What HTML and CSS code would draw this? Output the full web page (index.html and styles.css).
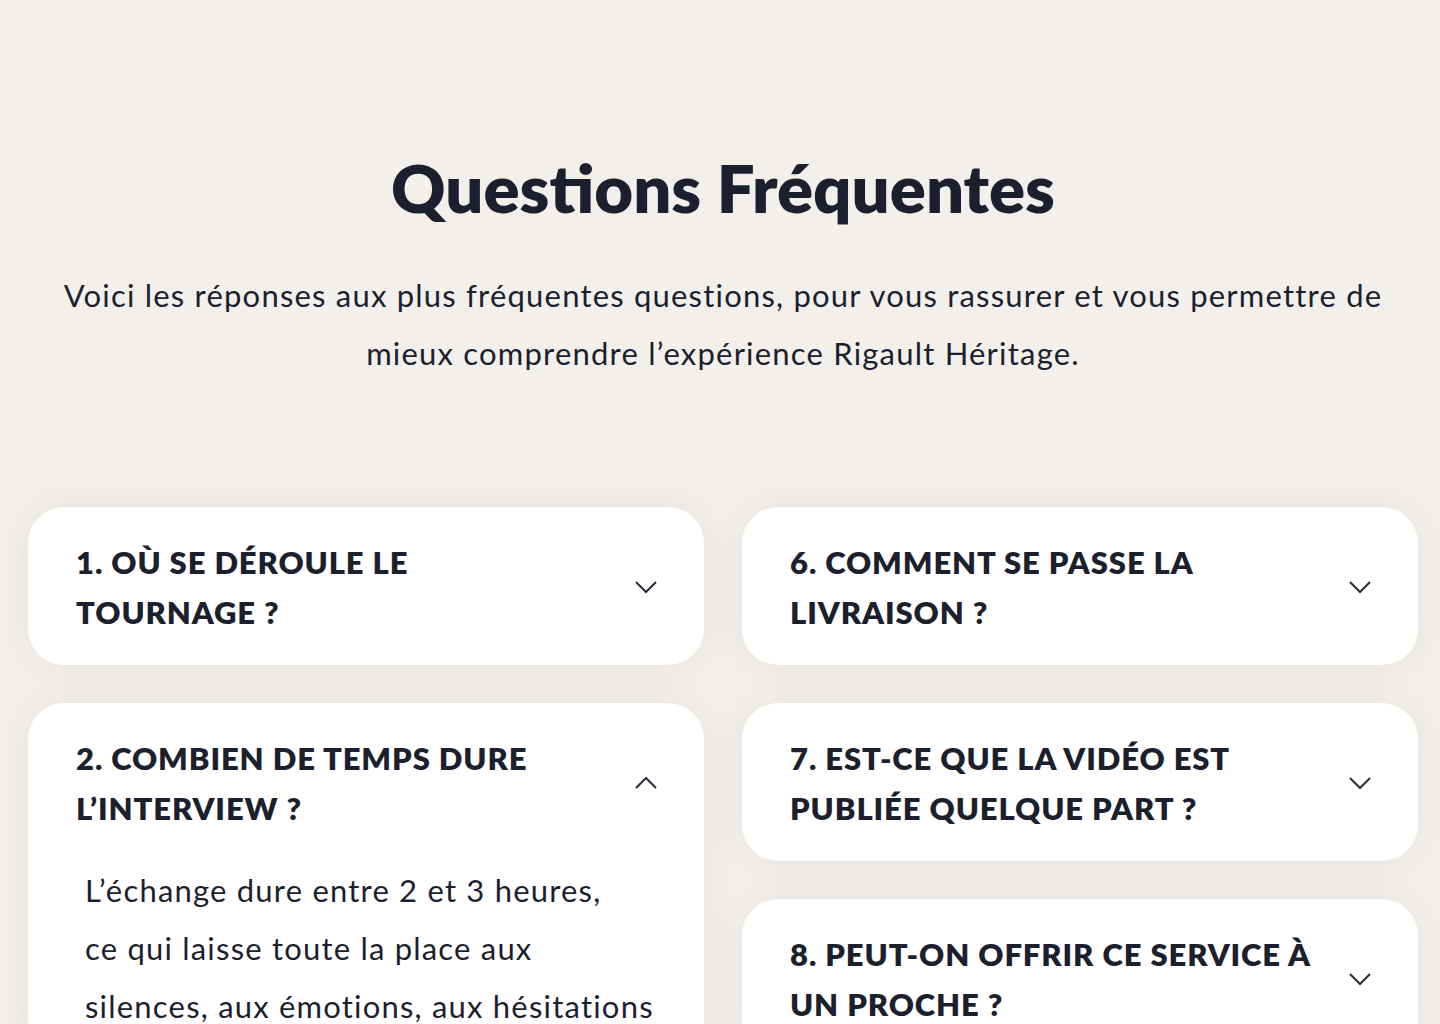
FILE: index.html
```html
<!DOCTYPE html>
<html lang="fr">
<head>
  <meta charset="UTF-8">
  <meta name="viewport" content="width=device-width, initial-scale=1.0">
  <title>Questions Fréquentes</title>
  <link rel="stylesheet" href="styles.css">
</head>
<body>
  <section id="faq">
    <h1 class="titre">Questions Fréquentes</h1>
    <p class="intro">Voici les réponses aux plus fréquentes questions, pour vous rassurer et vous permettre de mieux comprendre l’expérience Rigault Héritage.</p>

    <div class="colonnes">
      <div class="colonne">
        <div class="question">
          <div class="entete">
            <h3>1. OÙ SE DÉROULE LE TOURNAGE&nbsp;?</h3>
            <svg class="fleche" viewBox="0 0 24 14"><path d="M2 2 L12 12 L22 2"/></svg>
          </div>
        </div>
        <div class="question ouverte">
          <div class="entete">
            <h3>2. COMBIEN DE TEMPS DURE L’INTERVIEW&nbsp;?</h3>
            <svg class="fleche" viewBox="0 0 24 14"><path d="M2 12 L12 2 L22 12"/></svg>
          </div>
          <p class="reponse">L’échange dure entre 2 et 3 heures,<br>ce qui laisse toute la place aux<br>silences, aux émotions, aux hésitations</p>
        </div>
      </div>

      <div class="colonne">
        <div class="question">
          <div class="entete">
            <h3>6. COMMENT SE PASSE LA LIVRAISON&nbsp;?</h3>
            <svg class="fleche" viewBox="0 0 24 14"><path d="M2 2 L12 12 L22 2"/></svg>
          </div>
        </div>
        <div class="question">
          <div class="entete">
            <h3>7. EST-CE QUE LA VIDÉO EST PUBLIÉE QUELQUE PART&nbsp;?</h3>
            <svg class="fleche" viewBox="0 0 24 14"><path d="M2 2 L12 12 L22 2"/></svg>
          </div>
        </div>
        <div class="question">
          <div class="entete">
            <h3>8. PEUT-ON OFFRIR CE SERVICE À UN PROCHE&nbsp;?</h3>
            <svg class="fleche" viewBox="0 0 24 14"><path d="M2 2 L12 12 L22 2"/></svg>
          </div>
        </div>
      </div>
    </div>
  </section>
</body>
</html>
```

FILE: styles.css
```css
* {
  margin: 0;
  padding: 0;
  box-sizing: border-box;
}

body {
  background-color: #f3f0ec;
  color: #1b1f2e;
  font-family: Lato, "Noto Sans", sans-serif;
}

#faq {
  padding: 151px 22px 0 28px;
}

.titre {
  text-align: center;
  font-size: 67px;
  line-height: 72px;
  font-weight: 800;
}

.intro {
  max-width: 1340px;
  margin: 43px auto 0;
  text-align: center;
  font-size: 31px;
  line-height: 58px;
  letter-spacing: 1.2px;
}

.colonnes {
  display: flex;
  gap: 38px;
  margin-top: 125px;
}

.colonne {
  flex: 1;
  display: flex;
  flex-direction: column;
  gap: 38px;
}

.question {
  background-color: #fff;
  border-radius: 36px;
  padding: 30px 46px 28px 48px;
  box-shadow: 0 0 40px rgba(60, 45, 20, 0.07);
}

.entete {
  display: flex;
  align-items: center;
  gap: 20px;
}

.entete h3 {
  flex: 1;
  max-width: 537px;
  font-size: 31px;
  line-height: 50px;
  font-weight: 800;
  letter-spacing: 0.9px;
}

.fleche {
  width: 24px;
  height: 14px;
  margin-left: auto;
  fill: none;
  stroke: #2b2f3a;
  stroke-width: 2;
}

.reponse {
  margin-top: 28px;
  padding-left: 9px;
  font-size: 31px;
  line-height: 58px;
  letter-spacing: 1.2px;
  white-space: nowrap;
}
```
